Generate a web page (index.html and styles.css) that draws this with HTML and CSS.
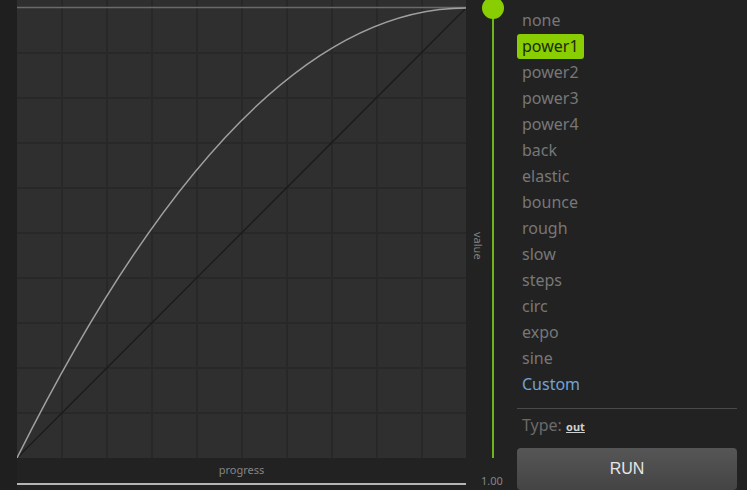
FILE: index.html
```html
<!DOCTYPE html>
<html>
<head>
<meta charset="utf-8">
<link rel="stylesheet" href="styles.css">
</head>
<body>
<div class="app">
  <div class="gutter"></div>
  <div class="graph-col">
    <svg class="graph" width="449" height="458" viewBox="0 0 449 458">
      <rect x="0" y="0" width="449" height="458" fill="#2f2f2f"/>
      <g stroke="#282828" stroke-width="2">
        <line x1="45" y1="0" x2="45" y2="458"/>
        <line x1="90" y1="0" x2="90" y2="458"/>
        <line x1="135" y1="0" x2="135" y2="458"/>
        <line x1="180" y1="0" x2="180" y2="458"/>
        <line x1="225" y1="0" x2="225" y2="458"/>
        <line x1="270" y1="0" x2="270" y2="458"/>
        <line x1="315" y1="0" x2="315" y2="458"/>
        <line x1="360" y1="0" x2="360" y2="458"/>
        <line x1="405" y1="0" x2="405" y2="458"/>
        <line x1="0" y1="53" x2="449" y2="53"/>
        <line x1="0" y1="98" x2="449" y2="98"/>
        <line x1="0" y1="143" x2="449" y2="143"/>
        <line x1="0" y1="188" x2="449" y2="188"/>
        <line x1="0" y1="233" x2="449" y2="233"/>
        <line x1="0" y1="278" x2="449" y2="278"/>
        <line x1="0" y1="323" x2="449" y2="323"/>
        <line x1="0" y1="368" x2="449" y2="368"/>
        <line x1="0" y1="413" x2="449" y2="413"/>
      </g>
      <line x1="0" y1="7.5" x2="449" y2="7.5" stroke="#6a6a6a" stroke-width="1.5"/>
      <line x1="0" y1="458" x2="449" y2="8" stroke="#1b1b1b" stroke-width="1.3"/>
      <path d="M0,458 Q224.5,8 449,8" fill="none" stroke="#a0a0a0" stroke-width="1.5"/>
    </svg>
    <div class="axis-label">progress</div>
    <div class="progress-line"></div>
  </div>
  <div class="slider-col">
    <div class="slider-body">
      <div class="value-label">value</div>
      <div class="rail">
        <div class="rail-line"></div>
        <div class="knob"></div>
      </div>
    </div>
    <div class="slider-value">1.00</div>
  </div>
  <div class="panel">
    <ul class="ease-list">
      <li>none</li>
      <li class="active">power1</li>
      <li>power2</li>
      <li>power3</li>
      <li>power4</li>
      <li>back</li>
      <li>elastic</li>
      <li>bounce</li>
      <li>rough</li>
      <li>slow</li>
      <li>steps</li>
      <li>circ</li>
      <li>expo</li>
      <li>sine</li>
      <li class="custom">Custom</li>
    </ul>
    <div class="type-row">Type: <span class="type-value">out</span></div>
    <button class="run">RUN</button>
  </div>
</div>
</body>
</html>
```

FILE: styles.css
```css
html, body {
  margin: 0;
  padding: 0;
  background: #222222;
  overflow: hidden;
}
.app {
  display: flex;
  width: 747px;
  height: 490px;
  font-family: "Noto Sans", sans-serif;
}
.gutter {
  width: 17px;
  background: #1f1f1f;
  flex: none;
}
.graph-col {
  width: 449px;
  flex: none;
  display: flex;
  flex-direction: column;
}
.graph {
  display: block;
}
.axis-label {
  height: 24px;
  line-height: 24px;
  text-align: center;
  font-size: 11px;
  color: #858585;
}
.progress-line {
  margin-top: 1px;
  height: 2px;
  background: #b5b5b5;
}
.slider-col {
  width: 51px;
  flex: none;
  display: flex;
  flex-direction: column;
}
.slider-body {
  height: 458px;
  flex: none;
  display: flex;
}
.value-label {
  width: 24px;
  box-sizing: border-box;
  padding-top: 34px;
  writing-mode: vertical-rl;
  text-align: center;
  font-size: 11px;
  color: #858585;
  line-height: 24px;
}
.rail {
  position: relative;
  width: 27px;
}
.rail-line {
  margin-left: 2px;
  margin-top: 8px;
  width: 2px;
  height: 450px;
  background: #6db51a;
}
.knob {
  position: absolute;
  left: -8px;
  top: -3px;
  width: 22px;
  height: 22px;
  border-radius: 50%;
  background: #88ce02;
}
.slider-value {
  margin-top: 16px;
  padding-left: 15px;
  font-size: 11px;
  line-height: 14px;
  color: #858585;
}
.panel {
  width: 220px;
  flex: none;
  display: flex;
  flex-direction: column;
}
.ease-list {
  list-style: none;
  margin: 0;
  padding: 8px 0 0 0;
  font-size: 16px;
}
.ease-list li {
  width: fit-content;
  height: 25px;
  line-height: 25px;
  margin-bottom: 1px;
  padding: 0 5px;
  color: #777777;
  border-radius: 3px;
}
.ease-list li.active {
  background: #88ce02;
  color: #1e2a00;
}
.ease-list li.custom {
  color: #6fa4d8;
}
.type-row {
  margin-top: 10px;
  border-top: 1px solid #4a4a4a;
  padding: 4px 5px 0;
  height: 30px;
  line-height: 24px;
  font-size: 16px;
  color: #6a6a6a;
}
.type-value {
  font-size: 11px;
  font-weight: bold;
  color: #d0d0d0;
  text-decoration: underline;
}
.run {
  margin-top: 6px;
  height: 44px;
  border: none;
  border-radius: 4px;
  background: linear-gradient(#565656, #444444);
  color: #e6e6e6;
  font-family: "Liberation Sans", sans-serif;
  font-size: 16px;
  padding: 0;
}
```
